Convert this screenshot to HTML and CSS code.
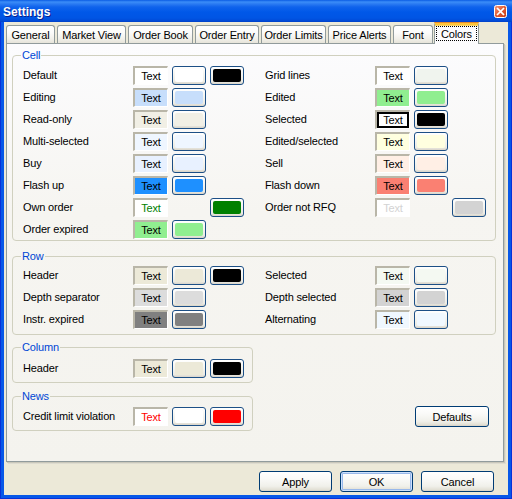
FILE: index.html
```html
<!DOCTYPE html>
<html>
<head>
<meta charset="utf-8">
<title>Settings</title>
<link rel="stylesheet" href="styles.css">
</head>
<body>
<div class="window">
  <div class="titlebar">
    <span class="title">Settings</span>
    <span class="close">
      <svg width="13" height="13" viewBox="0 0 13 13">
        <defs>
          <linearGradient id="cg" x1="0" y1="0" x2="1" y2="1">
            <stop offset="0" stop-color="#F49A7C"/>
            <stop offset="0.5" stop-color="#E25B34"/>
            <stop offset="1" stop-color="#C23A17"/>
          </linearGradient>
        </defs>
        <rect x="0.5" y="0.5" width="12" height="12" rx="2" fill="url(#cg)" stroke="#FFFFFF"/>
        <path d="M3.6 3.6 L9.4 9.4 M9.4 3.6 L3.6 9.4" stroke="#FFFFFF" stroke-width="1.7" stroke-linecap="square"/>
      </svg>
    </span>
  </div>
  <div class="client">
    <div class="tabs">
      <div class="tab t-general">General</div>
      <div class="tab t-market">Market View</div>
      <div class="tab t-book">Order Book</div>
      <div class="tab t-entry">Order Entry</div>
      <div class="tab t-limits">Order Limits</div>
      <div class="tab t-alerts">Price Alerts</div>
      <div class="tab t-font">Font</div>
      <div class="tab t-colors active"><span class="focus">Colors</span></div>
    </div>
    <div class="panel">
      <fieldset class="group g-cell">
        <legend>Cell</legend>
        <div class="grid">
          <div class="item"><span class="lbl">Default</span><span class="tb bg-white">Text</span><span class="sw"><i class="bg-white"></i></span><span class="sw"><i class="bg-black"></i></span></div>
          <div class="item"><span class="lbl">Grid lines</span><span class="tb bg-white">Text</span><span class="sw"><i class="bg-grid"></i></span></div>

          <div class="item"><span class="lbl">Editing</span><span class="tb bg-edit">Text</span><span class="sw"><i class="bg-edit"></i></span></div>
          <div class="item"><span class="lbl">Edited</span><span class="tb bg-lgreen">Text</span><span class="sw"><i class="bg-lgreen"></i></span></div>

          <div class="item"><span class="lbl">Read-only</span><span class="tb bg-ro">Text</span><span class="sw"><i class="bg-ro"></i></span></div>
          <div class="item"><span class="lbl">Selected</span><span class="tb bg-white boxed">Text</span><span class="sw"><i class="bg-black"></i></span></div>

          <div class="item"><span class="lbl">Multi-selected</span><span class="tb bg-multi">Text</span><span class="sw"><i class="bg-multi"></i></span></div>
          <div class="item"><span class="lbl">Edited/selected</span><span class="tb bg-lyellow">Text</span><span class="sw"><i class="bg-lyellow"></i></span></div>

          <div class="item"><span class="lbl">Buy</span><span class="tb bg-buy">Text</span><span class="sw"><i class="bg-buy"></i></span></div>
          <div class="item"><span class="lbl">Sell</span><span class="tb bg-sell">Text</span><span class="sw"><i class="bg-sell"></i></span></div>

          <div class="item"><span class="lbl">Flash up</span><span class="tb bg-flashup">Text</span><span class="sw"><i class="bg-flashup"></i></span></div>
          <div class="item"><span class="lbl">Flash down</span><span class="tb bg-salmon">Text</span><span class="sw"><i class="bg-salmon"></i></span></div>

          <div class="item"><span class="lbl">Own order</span><span class="tb bg-white fg-green">Text</span><span class="sw empty"></span><span class="sw"><i class="bg-green"></i></span></div>
          <div class="item"><span class="lbl">Order not RFQ</span><span class="tb bg-white fg-lgray">Text</span><span class="sw empty"></span><span class="sw"><i class="bg-lgray"></i></span></div>

          <div class="item"><span class="lbl">Order expired</span><span class="tb bg-lgreen">Text</span><span class="sw"><i class="bg-lgreen"></i></span></div>
        </div>
      </fieldset>

      <fieldset class="group g-row">
        <legend>Row</legend>
        <div class="grid">
          <div class="item"><span class="lbl">Header</span><span class="tb bg-beige">Text</span><span class="sw"><i class="bg-beige"></i></span><span class="sw"><i class="bg-black"></i></span></div>
          <div class="item"><span class="lbl">Selected</span><span class="tb bg-rowsel">Text</span><span class="sw"><i class="bg-rowsel"></i></span></div>

          <div class="item"><span class="lbl">Depth separator</span><span class="tb bg-gains">Text</span><span class="sw"><i class="bg-gains"></i></span></div>
          <div class="item"><span class="lbl">Depth selected</span><span class="tb bg-lgray">Text</span><span class="sw"><i class="bg-lgray"></i></span></div>

          <div class="item"><span class="lbl">Instr. expired</span><span class="tb bg-gray">Text</span><span class="sw"><i class="bg-gray"></i></span></div>
          <div class="item"><span class="lbl">Alternating</span><span class="tb bg-alice">Text</span><span class="sw"><i class="bg-alice"></i></span></div>
        </div>
      </fieldset>

      <fieldset class="group g-col half">
        <legend>Column</legend>
        <div class="item"><span class="lbl">Header</span><span class="tb bg-beige">Text</span><span class="sw"><i class="bg-beige"></i></span><span class="sw"><i class="bg-black"></i></span></div>
      </fieldset>

      <div class="newsrow">
        <fieldset class="group g-news half">
          <legend>News</legend>
          <div class="item"><span class="lbl">Credit limit violation</span><span class="tb bg-white fg-red">Text</span><span class="sw"><i class="bg-white"></i></span><span class="sw"><i class="bg-red"></i></span></div>
        </fieldset>
        <div class="btn defaults">Defaults</div>
      </div>
    </div>
    <div class="buttons">
      <div class="btn">Apply</div>
      <div class="btn default">OK</div>
      <div class="btn">Cancel</div>
    </div>
  </div>
</div>
</body>
</html>
```

FILE: styles.css
```css
* { box-sizing: border-box; }
html, body { margin: 0; padding: 0; }
body {
  width: 512px;
  height: 499px;
  overflow: hidden;
  font-family: "Liberation Sans", Arial, sans-serif;
  font-size: 11px;
  letter-spacing: -0.15px;
  color: #000;
  background: #0055E5;
}

.window {
  width: 512px;
  height: 499px;
  display: flex;
  flex-direction: column;
  background: #0758E8;
  box-shadow: inset 1px 0 #0831D9, inset -1px 0 #0831D9, inset 0 -1px #0831D9;
}

.titlebar {
  height: 22px;
  flex: none;
  display: flex;
  align-items: center;
  padding: 0 5px 0 3px;
  background: linear-gradient(to bottom, #0A5CE4 0px, #3B8DF8 2px, #2A7AF2 4px, #0F63EC 7px, #0058E8 12px, #0055E4 18px, #0049D6 21px, #003FC4 22px);
}
.title {
  flex: 1;
  color: #fff;
  font-weight: bold;
  font-size: 12px;
  letter-spacing: 0;
  text-shadow: 1px 1px 0 #0A1E8C;
  line-height: 14px;
  margin-top: 1px;
}
.close {
  width: 13px;
  height: 13px;
  display: block;
  margin-top: 1px;
}
.close svg { display: block; }

.client {
  flex: 1;
  margin: 0 4px 4px 4px;
  background: #ECE9D8;
  display: flex;
  flex-direction: column;
  padding: 0 4px 0 2px;
}

/* Tabs */
.tabs {
  height: 21px;
  flex: none;
  display: flex;
  align-items: flex-end;
  gap: 2px;
  position: relative;
  z-index: 1;
}
.tab {
  height: 18px;
  border: 1px solid #919B9C;
  border-bottom: none;
  border-radius: 3px 3px 0 0;
  background: linear-gradient(to bottom, #FFFFFF 0%, #FBFBFA 40%, #F1F0EA 75%, #E6E4DA 100%);
  display: flex;
  align-items: center;
  justify-content: center;
  padding-top: 1px;
  white-space: nowrap;
}
.t-general { width: 49px; }
.t-market { width: 69px; }
.t-book { width: 65px; }
.t-entry { width: 64px; }
.t-limits { width: 65px; }
.t-alerts { width: 63px; }
.t-font { width: 40px; }
.t-colors { width: 45px; }
.tab.active {
  height: 22px;
  margin: 0 0 -1px -1px;
  background: #FCFCFE;
  border-top: 3px solid #FFC53A;
  box-shadow: inset 0 1px 0 #FFD86A;
  position: relative;
  padding-top: 0;
  padding-bottom: 2px;
  border-radius: 3px 3px 0 0;
}
.tab.active::before {
  content: "";
  position: absolute;
  left: -1px;
  right: -1px;
  top: -3px;
  height: 1px;
  background: #E68B2C;
  border-radius: 3px 3px 0 0;
}
.focus {
  display: flex;
  align-items: center;
  justify-content: center;
  width: 41px;
  height: 15px;
  border: 1px dotted #000;
}

/* Panel */
.panel {
  height: 419px;
  flex: none;
  border: 1px solid #919B9C;
  background: linear-gradient(to bottom, #FCFCFE 0%, #F6F5F1 40%, #F4F3EE 100%);
  padding: 5px 7px 0 5px;
  box-shadow: 1px 1px 0 #C9C7BA, 2px 2px 0 #DEDCD0;
}

.group {
  margin: 0;
  padding: 5px 9px 4px 10px;
  border: 1px solid #D0D0BF;
  border-radius: 4px;
  min-inline-size: 0;
}
.group legend {
  padding: 0 1px;
  margin-left: -2px;
  color: #0046D5;
  line-height: 12px;
  font-size: 11px;
}
.g-cell { padding-bottom: 1px; }
.g-row { margin-top: 9px; padding-top: 4px; padding-bottom: 5px; }
.g-col { margin-top: 6px; padding-top: 6px; padding-bottom: 4px; }
.g-news { padding-top: 5px; padding-bottom: 4px; }
.half { width: 241px; }

.grid {
  display: grid;
  grid-template-columns: 221px 221px;
  column-gap: 21px;
  row-gap: 3px;
}
.item {
  display: flex;
  align-items: center;
  height: 19px;
}
.lbl {
  width: 110px;
  flex: none;
  white-space: nowrap;
  margin-top: -2px;
}
.tb {
  width: 35px;
  height: 19px;
  flex: none;
  display: flex;
  align-items: center;
  justify-content: center;
  border-style: solid;
  border-width: 2px 1px 1px 2px;
  border-color: #B9B6A8 #FFFFFF #FFFFFF #B9B6A8;
  padding-bottom: 1px;
}
.tb.boxed {
  box-shadow: inset 0 0 0 2px #000;
}
.sw {
  width: 34px;
  height: 19px;
  flex: none;
  margin-left: 4px;
  border: 1px solid #1C4F86;
  border-radius: 3px;
  padding: 2px;
  background: linear-gradient(to bottom, #FFFFFF 0%, #F6F6F2 40%, #ECEBE4 85%, #D8D3C8 100%);
}
.sw i {
  display: block;
  width: 100%;
  height: 100%;
  border-radius: 2px;
}
.sw.empty { visibility: hidden; }

.fg-green { color: #008000; }
.fg-lgray { color: #D3D3D3; }
.fg-red { color: #FF0000; }

.bg-white { background: #FFFFFF; }
.bg-black { background: #000000; }
.bg-edit { background: #C7DEFB; }
.bg-ro { background: #F1EFE5; }
.bg-multi { background: #EFF6FF; }
.bg-buy { background: #E8F1FF; }
.bg-flashup { background: #1E90FF; }
.bg-green { background: #008000; }
.bg-lgreen { background: #90EE90; }
.bg-grid { background: #F0F4EE; }
.bg-lyellow { background: #FFFFE0; }
.bg-sell { background: #FFEFE5; }
.bg-salmon { background: #FA8072; }
.bg-lgray { background: #D3D3D3; }
.bg-beige { background: #ECE9D8; }
.bg-gains { background: #DCDCDC; }
.bg-gray { background: #808080; }
.bg-rowsel { background: #F4F9F2; }
.bg-alice { background: #F0F8FF; }
.bg-red { background: #FF0000; }

.newsrow {
  display: flex;
  align-items: flex-end;
  margin-top: 7px;
}
.btn {
  width: 73px;
  height: 21px;
  flex: none;
  border: 1px solid #003C74;
  border-radius: 3px;
  background: linear-gradient(to bottom, #FFFFFF 0%, #FAFAF8 35%, #F0F0EA 75%, #E3E1D6 92%, #D6D0C5 100%);
  display: flex;
  align-items: center;
  justify-content: center;
}
.defaults {
  margin-left: auto;
  margin-right: 7px;
  margin-bottom: 4px;
  width: 74px;
}
.btn.default {
  box-shadow: inset 0 0 0 1px #CEE1FC, inset 0 0 0 2px #98B8EA;
}
.buttons {
  display: flex;
  justify-content: flex-end;
  gap: 8px;
  margin-top: 9px;
  padding-right: 10px;
}
```
